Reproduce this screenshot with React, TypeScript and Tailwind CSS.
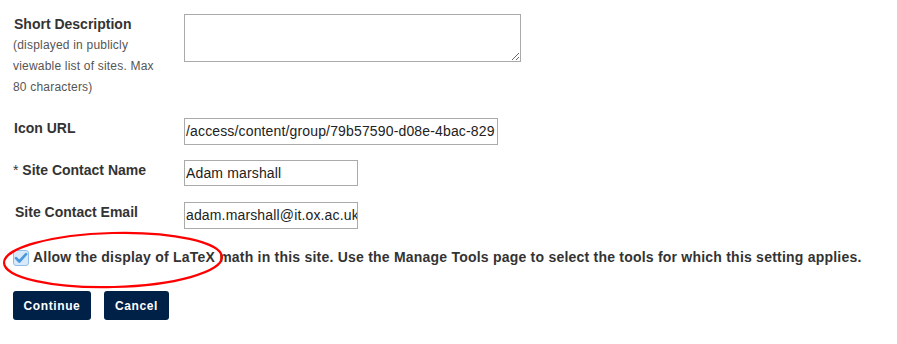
import React from "react";

const font = { fontFamily: '"Liberation Sans", Arial, sans-serif' };

export default function App() {
  return (
    <div className="relative w-[897px] h-[344px] bg-white text-[#333333]" style={font}>
      <div className="pl-[14px] pt-[14px] flex flex-col">
        {/* Short description */}
        <div className="flex">
          <div className="w-[170px] shrink-0 pt-[2px]">
            <div className="text-[14px] font-bold leading-[17px]">Short Description</div>
            <div className="text-[12px] tracking-[0.2px] leading-[21px] text-[#555555] mt-[2px] w-[150px] -ml-[1px]">
              (displayed in publicly viewable list of sites. Max 80 characters)
            </div>
          </div>
          <textarea className="w-[337px] h-[48px] border border-[#aaaaaa] resize-y outline-none" />
        </div>

        {/* Icon URL */}
        <div className="flex mt-[20px]">
          <div className="w-[170px] shrink-0 pt-[2px] text-[14px] font-bold leading-[17px]">Icon URL</div>
          <div className="w-[314px] h-[27px] border border-[#aaaaaa] overflow-hidden whitespace-nowrap text-[14px] tracking-[0.15px] leading-[25px] pl-[1px] text-[#222222]">
            /access/content/group/79b57590-d08e-4bac-829
          </div>
        </div>

        {/* Site contact name */}
        <div className="flex mt-[15px]">
          <div className="w-[170px] shrink-0 pt-[2px] text-[14px] font-bold leading-[17px] -ml-[1px]">
            <span className="font-normal">*</span> Site Contact Name
          </div>
          <div className="w-[174px] h-[26px] border border-[#aaaaaa] overflow-hidden whitespace-nowrap text-[14px] tracking-[0.15px] leading-[24px] pl-[1px] text-[#222222] ml-[1px]">
            Adam marshall
          </div>
        </div>

        {/* Site contact email */}
        <div className="flex mt-[16px]">
          <div className="w-[170px] shrink-0 pt-[2px] text-[14px] font-bold leading-[17px] ml-[1px]">Site Contact Email</div>
          <div className="w-[174px] h-[27px] border border-[#aaaaaa] overflow-hidden whitespace-nowrap text-[14px] tracking-[0.15px] leading-[25px] pl-[1px] text-[#222222] -ml-[1px]">
            adam.marshall@it.ox.ac.uk
          </div>
        </div>

        {/* Checkbox */}
        <div className="flex items-center mt-[20px] -ml-[1px]">
          <svg width="16" height="16" viewBox="0 0 16 16" className="shrink-0">
            <rect x="0.5" y="0.5" width="15" height="15" rx="2.5" fill="#d7e9fa" stroke="#8fbfe8" />
            <path d="M3 8.2 L6.3 11.5 L13 4.2" fill="none" stroke="#4a98dc" strokeWidth="2.6" strokeLinecap="round" strokeLinejoin="round" />
          </svg>
          <span className="ml-[4px] text-[14px] leading-[17px] font-bold tracking-[0.22px] whitespace-nowrap">
            Allow the display of LaTeX math in this site. Use the Manage Tools page to select the tools for which this setting applies.
          </span>
        </div>

        {/* Buttons */}
        <div className="flex gap-[13px] mt-[25px] -ml-[1px]">
          <button className="w-[78px] h-[29px] rounded-[3px] bg-[#002147] text-white text-[12px] font-bold tracking-[0.6px]">
            Continue
          </button>
          <button className="w-[65px] h-[29px] rounded-[3px] bg-[#002147] text-white text-[12px] font-bold tracking-[0.6px]">
            Cancel
          </button>
        </div>
      </div>

      {/* Red annotation ellipse */}
      <svg className="absolute left-0 top-0 pointer-events-none" width="897" height="344">
        <ellipse cx="113" cy="260" rx="109" ry="27" fill="none" stroke="#ff0000" strokeWidth="2.2" transform="rotate(-1.5 113 260)" />
      </svg>
    </div>
  );
}
